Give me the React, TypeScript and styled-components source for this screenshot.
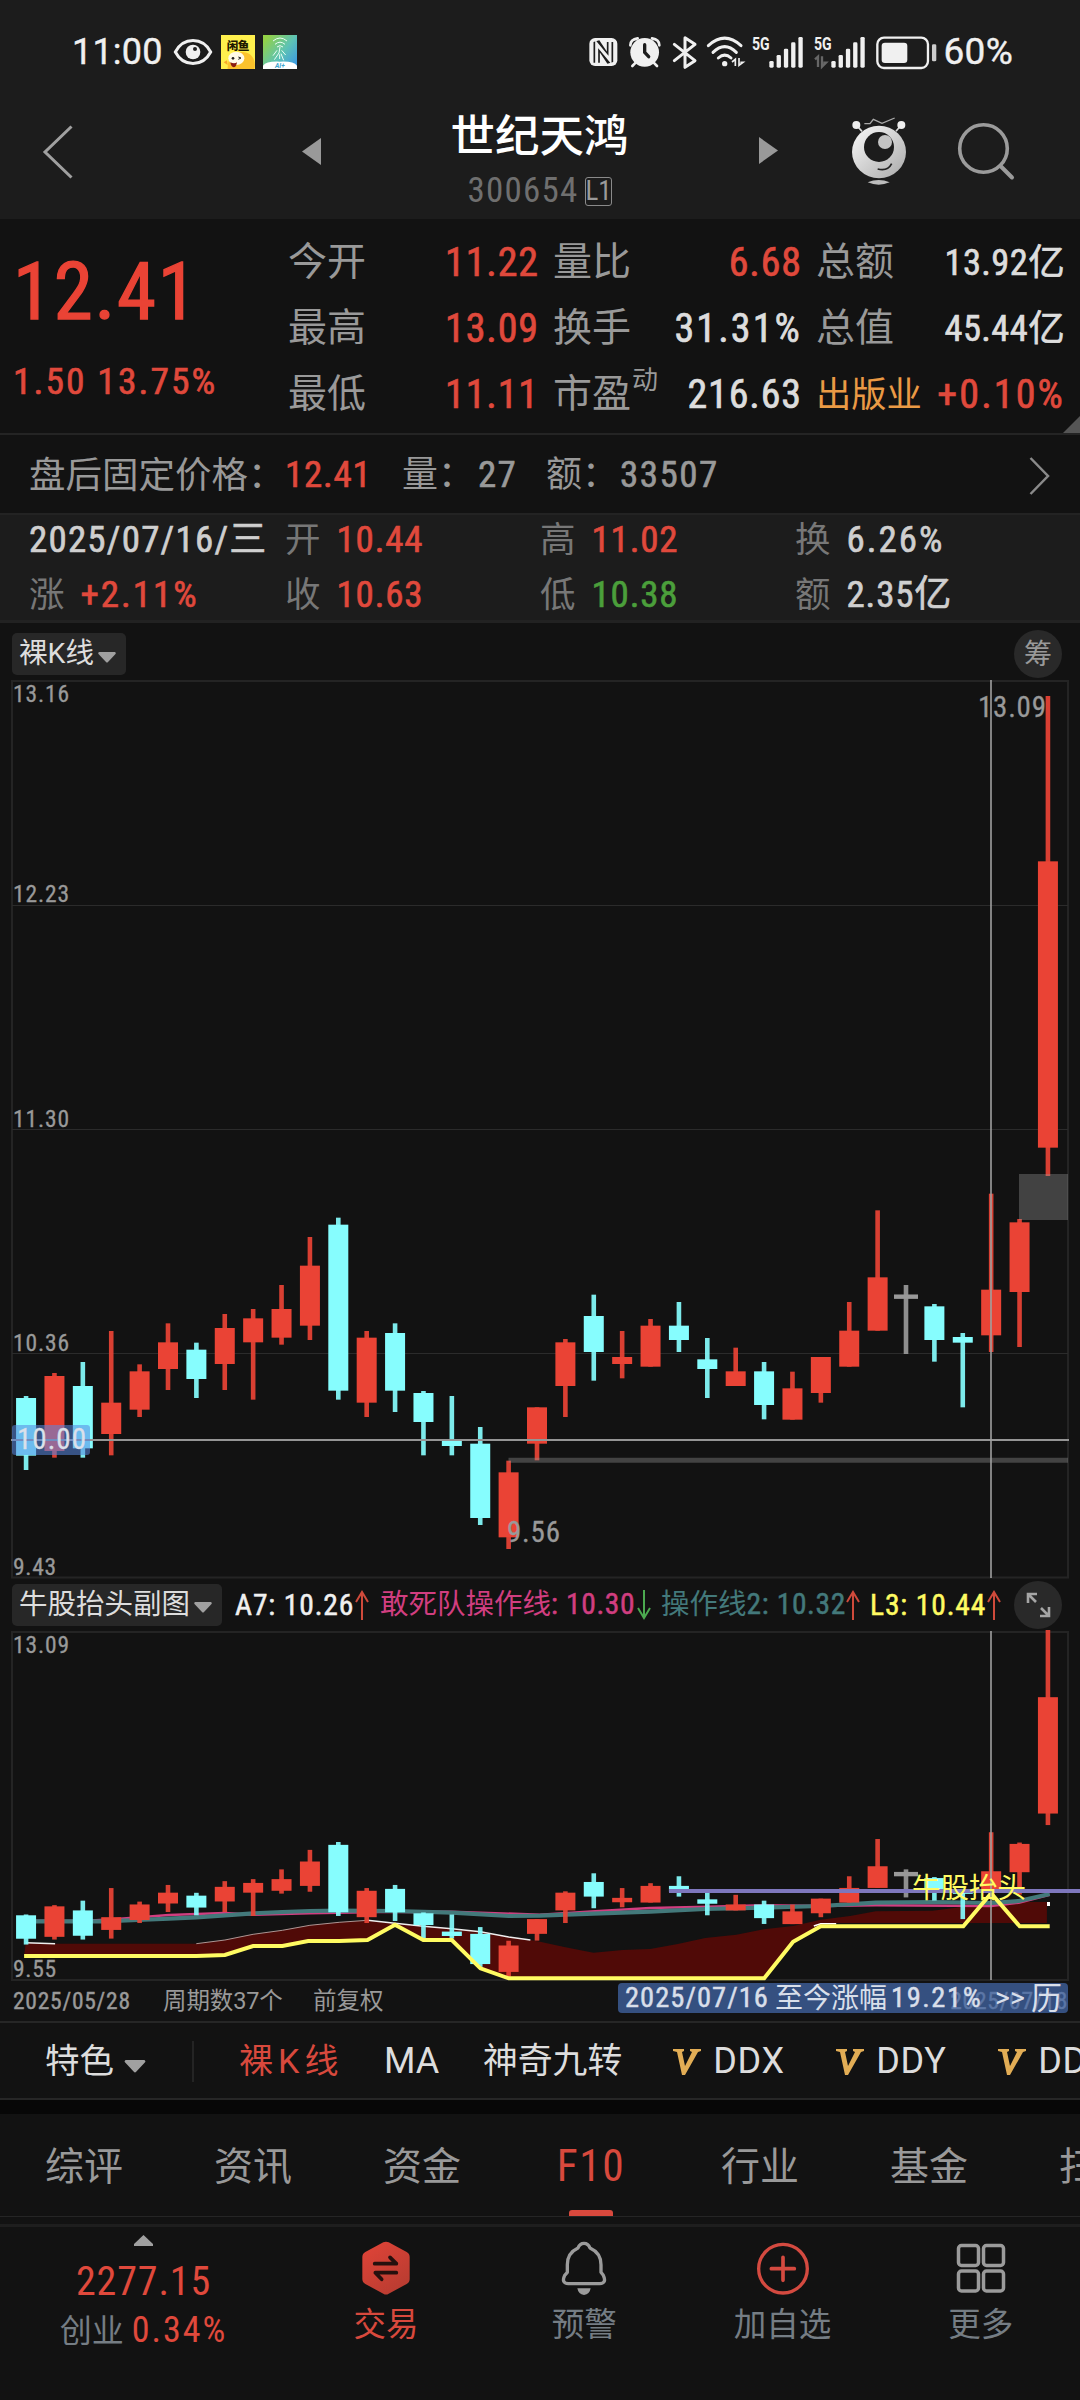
import React from "react";
import styled, { createGlobalStyle } from "styled-components";

const C = {
  bg: "#121212",
  panel: "#1c1c1c",
  line: "#242424",
  red: "#e0493c",
  bar: "#ea4335",
  cyan: "#86fdfe",
  grey: "#999999",
  dim: "#777777",
  light: "#dddddd",
  yellow: "#fffb62",
  teal: "#43797b",
  pink: "#d13e80",
  green: "#4b9f3b",
  orange: "#ea9a45",
  gold: "#e2ad55",
  slate: "#757d84",
};

const Global = createGlobalStyle`
  html, body { margin: 0; background: ${C.bg}; }
  body { width: 1080px; overflow-x: hidden; }
  * { box-sizing: border-box; }
`;

const Screen = styled.div`
  width: 1080px;
  height: 2400px;
  overflow: hidden;
  display: flex;
  flex-direction: column;
  background: ${C.bg};
  font-family: Roboto, "Noto Sans CJK SC", sans-serif;
  white-space: pre;
`;

const Txt = styled.span<{ $s: number; $c?: string; $w?: number; $ls?: number; $ml?: number; $width?: number }>`
  display: block;
  flex: none;
  font-size: ${(p) => p.$s}px;
  line-height: 1.2;
  color: ${(p) => p.$c ?? C.grey};
  font-weight: ${(p) => p.$w ?? 400};
  letter-spacing: ${(p) => p.$ls ?? 0}em;
  margin-left: ${(p) => p.$ml ?? 0}px;
  ${(p) => (p.$width ? `width: ${p.$width}px;` : "")}
`;

/* condensed figures for prices, dates and percentages */
const Fig = styled(Txt)<{ $thin?: boolean }>`
  font-stretch: 75%;
  -webkit-text-stroke: ${(p) => (p.$thin ? 0 : 0.017)}em currentColor;
`;

const Svg = styled.svg<{ $ml?: number }>`
  display: block;
  flex: none;
  margin-left: ${(p) => p.$ml ?? 0}px;
  overflow: visible;
`;

/* ---------- status bar ---------- */
const StatusBar = styled.div`
  height: 86px;
  padding: 19px 0 0 72px;
  display: flex;
  align-items: center;
  background: ${C.panel};
`;

const StatusRight = styled.div`
  display: flex;
  align-items: center;
  margin-left: auto;
  width: 491px;
`;

const Clock = styled(Txt)`
  -webkit-text-stroke: 0.4px currentColor;
`;

const W = "#f0f0f0";

const Signal = ({ x, second }: { x: number; second?: boolean }) => (
  <Svg $ml={second ? 10.7 : 8.3} width={51} height={35} viewBox={`${x} 45 153 105`}>
    <text x={x} y={91} fontSize={54} fontWeight={700} fill={W} textLength={53} lengthAdjust="spacingAndGlyphs" fontFamily="Roboto, sans-serif">
      5G
    </text>
    {second && <path d={`M${x + 3} 118l9-8v31M${x + 24} 109v31l12-12h-8`} stroke="#666" strokeWidth={7} fill="none" />}
    {[20, 38, 57, 76, 92].map((h, i) => (
      <rect key={i} x={x + 52 + i * 21.8} y={143 - h} width={13} height={h} rx={4} fill={W} />
    ))}
  </Svg>
);

const Status = () => (
  <StatusBar>
    <Clock $s={36} $c={W} $ls={0.005}>11:00</Clock>
    <Svg $ml={11} width={38} height={26} viewBox="0 0 114 78">
      <path d="M4 39C28-7 86-7 110 39C86 85 28 85 4 39Z" fill="none" stroke={W} strokeWidth={9} />
      <circle cx={57} cy={39} r={22} fill={W} />
      <circle cx={63} cy={30} r={6} fill="#222" />
    </Svg>
    <Svg $ml={9} width={34} height={34} viewBox="0 0 102 102">
      <rect width={102} height={102} fill="#fff04d" />
      <path d="M20 102C18 60 50 48 70 52C96 56 106 80 100 102Z" fill="#fbc22c" />
      <ellipse cx={46} cy={70} rx={24} ry={20} fill="#fffbe8" />
      <circle cx={36} cy={70} r={4} fill="#222" />
      <path d="M52 66l8 3-8 4" stroke="#222" strokeWidth={3} fill="none" />
      <path d="M28 82q12 6 20 0q-2 15-10 15q-8-2-10-15Z" fill="#8b1d10" />
      <path d="M8 82l10-6 2 14" fill="#f8a72a" />
      <text x={17} y={44} fontSize={35} fontWeight={900} fill="#1f1a00" textLength={68} fontFamily="'Noto Sans CJK SC', sans-serif">闲鱼</text>
    </Svg>
    <Svg $ml={8} width={34} height={34} viewBox="0 0 102 102">
      <defs>
        <linearGradient id="app" x1="0" y1="0" x2="1" y2="0.8">
          <stop offset="0.1" stopColor="#93d146" />
          <stop offset="0.6" stopColor="#5ec3b4" />
          <stop offset="1" stopColor="#3d9be0" />
        </linearGradient>
      </defs>
      <rect width={102} height={102} fill="url(#app)" />
      <path d="M0 92Q10 78 51 80Q92 78 102 92V102H0Z" fill="#fff" />
      <g fill="none" stroke="#eafff5" strokeWidth={3}>
        <path d="M30 18Q51 0 72 18M36 28Q51 15 66 28M42 36Q51 28 60 36M51 36L48 54L34 74M42 46L30 62M56 46L68 60M54 56L62 76M50 58V72" />
      </g>
      <text x={36} y={100} fontSize={20} fontStyle="italic" fontWeight={700} fill="#3fa5cf" fontFamily="Roboto, sans-serif">AI+</text>
    </Svg>
    <StatusRight>
      <Svg width={28.7} height={35} viewBox="27 45 86 105">
        <rect x={28} y={54} width={84} height={84} rx={17} fill={W} />
        <path d="M50 128V66L90 126V66" fill="none" stroke="#1c1c1c" strokeWidth={19} strokeLinejoin="bevel" />
        <path d="M50 138V72L90 120V54" fill="none" stroke={W} strokeWidth={9} />
      </Svg>
      <Svg $ml={11.7} width={31.7} height={35} viewBox="148 45 95 105">
        <circle cx={195} cy={97} r={43} fill={W} />
        <path d="M152 76Q152 58 174 55M239 76Q239 58 217 55M168 128l-10 10M222 128l10 10" stroke={W} strokeWidth={8} strokeLinecap="round" fill="none" />
        <path d="M195 74V97L207 110" stroke="#1c1c1c" strokeWidth={10} fill="none" strokeLinecap="round" />
      </Svg>
      <Svg $ml={12} width={23.7} height={35} viewBox="279 45 71 105">
        <path d="M283 73L345 122L315 142V53L345 73L283 122" stroke={W} strokeWidth={9} fill="none" strokeLinejoin="round" strokeLinecap="round" />
      </Svg>
      <Svg $ml={10.7} width={36.7} height={35} viewBox="382 45 110 105">
        <path d="M386 77Q435 32 484 77M400 97Q435 63 470 97M416 114Q435 97 454 114" stroke={W} strokeWidth={9} fill="none" strokeLinecap="round" />
        <circle cx={435} cy={131} r={8} fill={W} />
        <path d="M457 126l10-8v20M478 114v22l12-9h-8" stroke={W} strokeWidth={5} fill="none" />
      </Svg>
      <Signal x={517} />
      <Signal x={700} second />
      <Svg $ml={11} width={60.3} height={35} viewBox="887 45 181 105">
        <rect x={891} y={53} width={152} height={91} rx={20} fill="none" stroke={W} strokeWidth={7} />
        <rect x={904} y={68} width={77} height={61} rx={10} fill={W} />
        <rect x={1055} y={73} width={13} height={51} rx={4} fill="#ccc" />
      </Svg>
      <Clock $s={37} $c={W} $ml={7} $ls={0.01}>60%</Clock>
    </StatusRight>
  </StatusBar>
);

/* ---------- title bar ---------- */
const TitleBar = styled.header`
  height: 133px;
  padding: 21px 63px 0 43px;
  display: flex;
  align-items: flex-start;
  background: ${C.panel};
`;

const TitleText = styled.div`
  width: 438px;
  padding: 4px 1px 0 0;
  display: flex;
  flex-direction: column;
  align-items: center;
`;

const CodeRow = styled.div`
  display: flex;
  align-items: center;
  gap: 6px;
  margin-top: 6px;
`;

const LevelBadge = styled.span`
  width: 27px;
  height: 29px;
  border: 1.5px solid #8a8a8a;
  border-radius: 3px;
  color: #9a9a9a;
  font-size: 27px;
  font-stretch: 75%;
  line-height: 27px;
  text-align: center;
`;

const Title = () => (
  <TitleBar>
    <Svg width={30} height={54} viewBox="0 0 30 54" style={{ marginTop: 18 }}>
      <path d="M28.500 1.500L2 27L28.500 52.500" fill="none" stroke="#a0a0a0" strokeWidth={3} />
    </Svg>
    <Svg $ml={229} width={19} height={27} viewBox="0 0 19 27" style={{ marginTop: 31 }}>
      <path d="M19 0V27L0 13.500Z" fill={C.grey} />
    </Svg>
    <TitleText>
      <Txt $s={44.5} $c="#ffffff" $w={500}>世纪天鸿</Txt>
      <CodeRow>
        <Fig $thin $s={35} $c="#6f6f6f" $ls={0.035}>300654</Fig>
        <LevelBadge>L1</LevelBadge>
      </CodeRow>
    </TitleText>
    <Svg width={19} height={27} viewBox="0 0 19 27" style={{ marginTop: 30 }}>
      <path d="M0 0V27L19 13.500Z" fill={C.grey} />
    </Svg>
    <Svg $ml={73} width={56} height={68} viewBox="815 292 168 204" style={{ marginTop: 10 }}>
      <defs>
        <linearGradient id="bot" x1="0" y1="0" x2="1" y2="1">
          <stop offset="0" stopColor="#fafafa" />
          <stop offset="1" stopColor="#a9a9a9" />
        </linearGradient>
      </defs>
      <path d="M831 316L848 335M966 316L950 335" stroke="#ddd" strokeWidth={5} />
      <circle cx={831} cy={316} r={12} fill="#eee" />
      <circle cx={966} cy={316} r={12} fill="#eee" />
      <path d="M855 312H872L882 299L908 311L946 295" stroke="#aaa" strokeWidth={4} fill="none" />
      <ellipse cx={899} cy={397} rx={81} ry={79} fill="url(#bot)" />
      <ellipse cx={899} cy={382} rx={45} ry={45} fill="#1c1c1c" />
      <circle cx={917} cy={367} r={21} fill="#c4c4c4" />
      <path d="M895 448Q925 456 937 432" stroke="#222" strokeWidth={5} fill="none" />
      <path d="M865 488Q898 474 931 488Q898 502 865 488Z" fill="#bdbdbd" />
    </Svg>
    <Svg $ml={51} width={57} height={58} viewBox="0 0 57 58" style={{ marginTop: 16 }}>
      <circle cx={25.500} cy={25.500} r={23.800} fill="none" stroke="#9b9b9b" strokeWidth={3.600} />
      <path d="M42.500 43L54 54.500" stroke="#9b9b9b" strokeWidth={4} strokeLinecap="round" />
    </Svg>
  </TitleBar>
);

/* ---------- quote ---------- */
const Quote = styled.section`
  position: relative;
  height: 216px;
  display: flex;
  border-bottom: 2px solid ${C.line};
`;

const PriceCol = styled.div`
  width: 288px;
  padding: 26px 0 0 13px;
  display: flex;
  flex-direction: column;
`;

const StatGrid = styled.div`
  width: 777px;
  padding-top: 11px;
  display: grid;
  grid-template-columns: 251px 249px 249px;
  grid-auto-rows: 66px;
  column-gap: 14px;
`;

const Stat = styled.div`
  display: flex;
  align-items: center;
  justify-content: space-between;
`;

const Sup = styled.sup`
  position: relative;
  top: -18px;
  font-size: 26px;
  line-height: 0;
  margin-left: 1px;
  vertical-align: baseline;
`;

const Corner = styled.i`
  position: absolute;
  right: 0;
  bottom: 0;
  border-right: 17px solid #555;
  border-top: 17px solid transparent;
`;

type StatItem = [label: string, value: string, color: string, unit?: string];
const stats: StatItem[] = [
  ["今开", "11.22", C.red], ["量比", "6.68", C.red], ["总额", "13.92", C.light, "亿"],
  ["最高", "13.09", C.red], ["换手", "31.31%", C.light], ["总值", "45.44", C.light, "亿"],
  ["最低", "11.11", C.red], ["市盈", "216.63", C.light], ["出版业", "+0.10%", C.red],
];

const spacing = (v: string) => (v.includes("%") ? 0.053 : 0.022);

const QuoteBlock = () => (
  <Quote>
    <PriceCol>
      <Fig $s={79} $c={C.bar} $ls={0.022}>12.41</Fig>
      <Fig $s={37.500} $c={C.red} $ls={0.055} style={{ marginTop: 19 }}>1.50 13.75%</Fig>
    </PriceCol>
    <StatGrid>
      {stats.map(([label, value, color, unit]) => (
        <Stat key={label}>
          <Txt $s={label.length > 2 ? 35.300 : 39} $c={label.length > 2 ? C.orange : C.grey}>
            {label}
            {label === "市盈" && <Sup>动</Sup>}
          </Txt>
          <Fig $s={unit ? 36.500 : 40} $c={color} $ls={unit ? 0.01 : spacing(value)}>
            {value}
            {unit}
          </Fig>
        </Stat>
      ))}
    </StatGrid>
    <Corner />
  </Quote>
);

/* ---------- after-hours row ---------- */
const AfterRow = styled.section`
  height: 79px;
  padding: 3px 30px 0 29px;
  display: flex;
  align-items: center;
`;

const After = () => (
  <AfterRow>
    <Txt $s={36.5} $width={256}>盘后固定价格：</Txt>
    <Fig $s={37} $c={C.red} $ls={0.02} $width={117}>12.41</Fig>
    <Txt $s={36} $width={76}>量：</Txt>
    <Fig $s={37} $ls={0.035} $width={68}>27</Fig>
    <Txt $s={36} $width={74}>额：</Txt>
    <Fig $s={37} $ls={0.04}>33507</Fig>
    <Svg width={21} height={38} viewBox="0 0 21 38" style={{ marginLeft: "auto" }}>
      <path d="M1.500 1L19 19L1.500 37" fill="none" stroke="#8a8a8a" strokeWidth={2.500} />
    </Svg>
  </AfterRow>
);

/* ---------- selected day panel ---------- */
const DayPanel = styled.section`
  height: 110px;
  padding: 0 0 2px 29px;
  display: grid;
  grid-template-columns: 256px 255px 255px 1fr;
  grid-template-rows: 49px 61px;
  background: ${C.panel};
  border-top: 2px solid #232323;
  border-bottom: 3px solid #222;
`;

const DayCell = styled.div`
  display: flex;
  align-items: center;
  gap: 16px;
`;

const day: [string, string, string][] = [
  ["", "2025/07/16/三", "#cfcfcf"], ["开", "10.44", C.red], ["高", "11.02", C.red], ["换", "6.26%", "#cfcfcf"],
  ["涨", "+2.11%", C.red], ["收", "10.63", C.red], ["低", "10.38", C.green], ["额", "2.35亿", "#cfcfcf"],
];

/* ---------- charts ---------- */
const Bar = styled.div<{ $h: number; $top?: number }>`
  height: ${(p) => p.$h}px;
  padding: ${(p) => p.$top ?? 0}px 18px 0 12px;
  display: flex;
  align-items: center;
`;

const Chip = styled.div<{ $w: number }>`
  width: ${(p) => p.$w}px;
  height: 42px;
  padding: 0 10px 0 7px;
  display: flex;
  align-items: center;
  justify-content: space-between;
  flex: none;
  border-radius: 5px;
  background: #272727;
`;

const Round = styled.div`
  width: 48px;
  height: 48px;
  margin-left: auto;
  flex: none;
  display: flex;
  align-items: center;
  justify-content: center;
  border-radius: 50%;
  background: #292929;
`;

const Caret = ({ w = 18, h = 11 }: { w?: number; h?: number }) => (
  <Svg width={w} height={h} viewBox="0 0 18 11" preserveAspectRatio="none" style={{ marginTop: 6 }}>
    <path d="M1 0H17Q18.500 1 17.500 2L10 10Q9 11 8 10L0.500 2Q-0.500 1 1 0Z" fill="#a0a0a0" />
  </Svg>
);

// [high, body top, body bottom, low] in thirds of a pixel below y = 1150, then the colour key
type Candle = [number, number, number, number, "r" | "c" | "g"];
const candles: Candle[] = [
  [738, 744, 917, 960, "c"], [669, 678, 903, 923, "r"], [636, 708, 895, 923, "c"], [543, 758, 852, 916, "r"],
  [643, 664, 779, 801, "r"], [520, 577, 657, 720, "r"], [578, 599, 687, 744, "c"], [492, 534, 642, 720, "r"],
  [477, 505, 577, 749, "r"], [405, 477, 563, 584, "r"], [261, 347, 527, 570, "r"], [203, 224, 722, 749, "c"],
  [543, 563, 758, 801, "r"], [520, 549, 722, 786, "c"], [723, 729, 816, 916, "c"], [738, 873, 888, 916, "c"],
  [831, 881, 1104, 1125, "c"], [932, 967, 1162, 1197, "r"], [772, 772, 881, 931, "r"], [567, 577, 708, 801, "r"],
  [434, 498, 606, 692, "c"], [543, 621, 642, 685, "r"], [507, 527, 650, 650, "r"], [456, 527, 570, 606, "c"],
  [564, 628, 657, 744, "c"], [593, 664, 708, 708, "r"], [636, 664, 765, 808, "c"], [665, 715, 809, 809, "r"],
  [621, 621, 729, 758, "r"], [456, 542, 650, 650, "r"], [181, 382, 542, 542, "r"], [405, 440, 440, 612, "g"],
  [462, 469, 570, 635, "c"], [549, 561, 578, 772, "c"], [131, 419, 556, 606, "r"], [207, 217, 426, 591, "r"],
  [-1362, -866, -7, 78, "r"],
];
const fills = { r: C.bar, c: C.cyan, g: C.grey };

const Candles = ({ map }: { map: (y: number) => number }) => (
  <g>
    {candles.map(([h, t, b, l, k], i) => {
      const x = 26.07 + i * 28.385;
      const y = (v: number) => map(1150 + v / 3);
      const bh = Math.max(y(b) - y(t), 4.4);
      const bw = k === "g" ? 24 : 20;
      const mid = (y(b) + y(t)) / 2;
      return (
        <g key={i} fill={fills[k]}>
          <rect x={x - 2.300} y={y(h)} width={4.600} height={y(l) - y(h)} opacity={0.92} />
          <rect x={x - bw / 2} y={mid - bh / 2} width={bw} height={bh} />
        </g>
      );
    })}
  </g>
);

const Figure = styled.text`
  font-family: Roboto, sans-serif;
  font-stretch: 75%;
  stroke-width: 0.3px;
`;

const Num = ({ x, y, s = 23.5, w, children, fill = C.grey }: { x: number; y: number; s?: number; w: number; children: string; fill?: string }) => (
  <Figure x={x} y={y} fontSize={s} textLength={w} fill={fill} stroke={fill}>
    {children}
  </Figure>
);

const MainChart = () => (
  <Svg width={1080} height={898} viewBox="0 680 1080 898">
    <rect x={12} y={681} width={1056} height={896.500} fill="none" stroke="#242424" strokeWidth={2} />
    {[905.500, 1129.500, 1353.500].map((y) => (
      <path key={y} d={`M12 ${y}H1068`} stroke="#2b2b2b" strokeWidth={1.200} />
    ))}
    <Num x={13} y={702} w={56}>13.16</Num>
    <Num x={13} y={902} w={56}>12.23</Num>
    <Num x={13} y={1127} w={56}>11.30</Num>
    <Num x={13} y={1351} w={56}>10.36</Num>
    <Num x={13} y={1575} w={43}>9.43</Num>
    <Candles map={(y) => y} />
    <rect x={1019} y={1174} width={49} height={46} fill="#999" opacity={0.36} />
    <path d="M508.500 1460.300H1068" stroke="#999" opacity={0.36} strokeWidth={5} />
    <Num x={978} y={717} s={29} w={68}>13.09</Num>
    <Num x={507} y={1542} s={29} w={53}>9.56</Num>
    <path d="M11 1440H1069" stroke="#959595" strokeWidth={2} />
    <path d="M991 680V1578" stroke="#a0a0a0" strokeWidth={1.600} />
    <rect x={12} y={1425} width={78} height={30} rx={3} fill="rgb(88,136,225)" opacity={0.56} />
    <Num x={17} y={1449} s={29} w={69} fill="#dbe0ea">10.00</Num>
  </Svg>
);

// points on a grid 2.9037 units per pixel across and 3 down; the right half starts at R
const P = (pts: number[][]) =>
  pts.map(([x, y]) => `${(x / 2.9037).toFixed(1)},${(1570 + y / 3).toFixed(1)}`).join(" ");
const R = 1568;

const yellow = [
  [70, 1158], [570, 1158], [653, 1155], [735, 1128], [820, 1128], [895, 1113], [985, 1113], [1067, 1110],
  [1147, 1064], [1229, 1110], [1312, 1110], [1395, 1195], [1477, 1225], [R + 651, 1225], [R + 735, 1115],
  [R + 815, 1069], [R + 1229, 1069], [R + 1310, 970], [R + 1393, 1069], [R + 1480, 1069],
];
const average = [
  [75, 1118], [160, 1121], [570, 1121], [653, 1110], [735, 1093], [820, 1081], [900, 1066], [985, 1057],
  [1067, 1051], [1147, 1060], [1229, 1069], [1312, 1076], [1395, 1085], [1477, 1101], [R - 28, 1110], [R, 1115],
  [R + 74, 1132], [R + 155, 1148], [R + 240, 1140], [R + 320, 1137], [R + 400, 1122], [R + 480, 1104],
  [R + 570, 1094], [R + 650, 1078], [R + 735, 1068], [R + 815, 1049], [R + 900, 1038], [R + 975, 1024],
  [R + 1140, 1022], [R + 1229, 1010], [R + 1310, 1000], [R + 1400, 996], [R + 1472, 996],
];
const tealLine = [
  [75, 1054], [300, 1054], [400, 1050], [490, 1046], [570, 1042], [653, 1036], [735, 1030], [820, 1026],
  [900, 1023], [985, 1022], [1147, 1023], [1312, 1028], [1477, 1038], [R, 1037], [R + 155, 1031], [R + 320, 1025],
  [R + 480, 1017], [R + 650, 1013], [R + 815, 1008], [R + 975, 998], [R + 1140, 996], [R + 1310, 999],
  [R + 1390, 993], [R + 1480, 972],
];
const pinkLine = [
  [75, 1052], [240, 1053], [330, 1048], [490, 1035], [653, 1029], [735, 1034], [900, 1030], [1100, 1026],
  [1312, 1025], [R, 1034], [R + 160, 1024], [R + 320, 1014], [R + 490, 1010], [R + 650, 1006], [R + 815, 1008],
  [R + 975, 1006], [R + 1310, 1008], [R + 1390, 998], [R + 1480, 974],
];

const SubChart = () => (
  <Svg width={1080} height={350} viewBox="0 1631 1080 350">
    <rect x={12} y={1632} width={1056} height={348} fill="none" stroke="#242424" strokeWidth={2} />
    <Num x={13} y={1653} w={56}>13.09</Num>
    <Num x={13} y={1977} w={43}>9.55</Num>
    <polygon
      points={P([...average, [R + 1472, 1059], [R + 830, 1059], ...yellow.slice(0, 16).reverse()])}
      fill="#500a07"
    />
    <polyline points={P(average.slice(0, 2))} fill="none" stroke="#eee" strokeWidth={1.500} />
    <polyline points={P(average.slice(2, 9))} fill="none" stroke="#bba6a4" strokeWidth={0.900} />
    <polyline points={P(average.slice(8, 15))} fill="none" stroke="#eee" strokeWidth={1.500} />
    <polyline points={P(pinkLine)} fill="none" stroke={C.pink} strokeWidth={2.600} />
    <polyline points={P(tealLine)} fill="none" stroke={C.teal} strokeWidth={4.200} />
    <Candles map={(y) => 1630 + (y - 696) * 0.4064} />
    <polyline points={P([[R + 795, 1068], [R + 815, 1061], [R + 860, 1061]])} fill="none" stroke="#fff" strokeWidth={1.500} />
    <polyline points={P(yellow)} fill="none" stroke={C.yellow} strokeWidth={4} />
    <rect x={1047} y={1902} width={3} height={4} fill="#fff" />
    <path d="M669 1891H1080" stroke="#7e77bd" strokeWidth={4.200} />
    <path d="M991 1631V1980" stroke="#a0a0a0" strokeWidth={1.600} />
    <text x={912} y={1898} fontSize={28.500} fill={C.yellow} fontFamily="'Noto Sans CJK SC', sans-serif">牛股抬头</text>
  </Svg>
);

const Arrow = ({ up }: { up?: boolean }) => (
  <Svg width={14} height={30} viewBox="0 0 14 30">
    <path
      d={up ? "M7 30V2M1 12L7 2L13 12" : "M7 0V28M1 18L7 28L13 18"}
      fill="none"
      stroke={up ? "#cf4a3b" : "#4caa50"}
      strokeWidth={2}
    />
  </Svg>
);

const Indicator = styled.div<{ $w: number; $c: string; $ls?: number }>`
  width: ${(p) => p.$w}px;
  flex: none;
  display: flex;
  align-items: center;
  justify-content: space-between;
  color: ${(p) => p.$c};
  font-size: 29.500px;
  font-stretch: 75%;
  line-height: 40px;
  -webkit-text-stroke: 0.5px currentColor;
  letter-spacing: ${(p) => p.$ls ?? 0.022}em;
  margin-left: 11px;
`;

const Cjk = styled.span<{ $s: number }>`
  font-size: ${(p) => p.$s}px;
  -webkit-text-stroke: 0;
  letter-spacing: 0;
`;

const DateRow = styled.div`
  position: relative;
  height: 40px;
  padding: 0 12px 0 13px;
  display: flex;
  align-items: center;
`;

const SpanTag = styled.div`
  position: absolute;
  left: 618px;
  top: 2px;
  width: 450px;
  height: 30px;
  padding: 0 0 0 7px;
  display: flex;
  align-items: center;
  border-radius: 4px;
  background: rgba(66, 104, 170, 0.72);
`;

/* ---------- indicator tabs ---------- */
const ChipRow = styled.nav`
  height: 79px;
  display: flex;
  align-items: center;
  padding: 2px 0 0 45px;
  border-top: 2px solid #262626;
  border-bottom: 2px solid #262626;
  overflow: hidden;
`;

const Divider = styled.i`
  width: 2px;
  height: 41px;
  margin-left: 46px;
  background: #242424;
  flex: none;
`;

const Vip = ({ ml }: { ml: number }) => (
  <Svg $ml={ml} width={28} height={26} viewBox="0 0 28 26">
    <path d="M0 0H11V2L9 3L12 17L19 3L17 2V0H28V2L25 3L12 26H9L4 3L0 2Z" fill={C.gold} />
  </Svg>
);

const Strip = styled.div`
  height: 14px;
  background: #070707;
`;

/* ---------- section tabs ---------- */
const Tabs = styled.nav`
  height: 103px;
  display: flex;
  flex: none;
  overflow: hidden;
  border-bottom: 1px solid #252525;
`;

const Tab = styled.div<{ $on?: boolean }>`
  width: 169px;
  flex: none;
  display: flex;
  flex-direction: column;
  align-items: center;
  justify-content: space-between;
  padding: 30px 1px 0 0;
  font-size: ${(p) => (p.$on ? 43.5 : 39)}px;
  font-stretch: 75%;
  line-height: 46px;
  letter-spacing: ${(p) => (p.$on ? "0.035em" : 0)};
  color: ${(p) => (p.$on ? "#d8493d" : C.grey)};
  &::after {
    content: "";
    width: 44px;
    height: 6px;
    border-radius: 3px 3px 0 0;
    background: ${(p) => (p.$on ? "#d8493d" : "transparent")};
  }
`;

/* ---------- bottom bar ---------- */
const Bottom = styled.footer`
  height: 176px;
  margin-top: 7px;
  display: grid;
  grid-template-columns: 287px repeat(4, 198.25px);
  border-top: 3px solid #1e1e1e;
`;

const IndexCell = styled.div`
  display: flex;
  flex-direction: column;
  align-items: center;
  padding-top: 8px;
`;

const Row = styled.div`
  display: flex;
  align-items: center;
  margin-top: 3px;
`;

const Action = styled.div<{ $c: string }>`
  display: flex;
  flex-direction: column;
  align-items: center;
  padding-top: 14px;
  font-size: 32.500px;
  line-height: 40px;
  color: ${(p) => p.$c};
  gap: 10px;
`;

const App = () => (
  <Screen>
    <Global />
    <Status />
    <Title />
    <QuoteBlock />
    <After />
    <DayPanel>
      {day.map(([label, value, color]) => (
        <DayCell key={value}>
          {label && <Txt $s={35.500} $c={C.dim}>{label}</Txt>}
          <Fig $s={37} $c={color} $ls={label ? spacing(value) : 0.032}>{value}</Fig>
        </DayCell>
      ))}
    </DayPanel>

    <Bar $h={57} $top={5}>
      <Chip $w={114}>
        <Txt $s={28.500} $c={C.light}>裸K线</Txt>
        <Caret />
      </Chip>
      <Round>
        <Txt $s={28}>筹</Txt>
      </Round>
    </Bar>
    <MainChart />
    <Bar $h={53}>
      <Chip $w={210}>
        <Txt $s={28.500} $c={C.light}>牛股抬头副图</Txt>
        <Caret />
      </Chip>
      <Indicator $w={134} $c="#f0f0f0" $ls={0.03} style={{ marginLeft: 13 }}><span>A7: 10.26</span><Arrow up /></Indicator>
      <Indicator $w={271} $c={C.pink}><span><Cjk $s={28.500}>敢死队操作线</Cjk>: 10.30</span><Arrow /></Indicator>
      <Indicator $w={198} $c={C.teal} style={{ marginLeft: 10 }}><span><Cjk $s={28.500}>操作线</Cjk>2: 10.32</span><Arrow up /></Indicator>
      <Indicator $w={131} $c={C.yellow} $ls={0.03}><span>L3: 10.44</span><Arrow up /></Indicator>
      <Round>
        <Svg width={25} height={26} viewBox="0 0 25 26">
          <path d="M2 11V2H11M2 2L10 10M23 15V24H14M23 24L15 16" fill="none" stroke="#a5a5a5" strokeWidth={2.600} />
        </Svg>
      </Round>
    </Bar>
    <SubChart />
    <DateRow>
      <Fig $s={23.500} $ls={0.032} $width={150}>2025/05/28</Fig>
      <Txt $s={23.500} $ls={-0.005} $width={150}>周期数37个</Txt>
      <Txt $s={23.500}>前复权</Txt>
      <Fig $s={23.500} $ls={0.032} style={{ marginLeft: "auto" }}>2025/07/18</Fig>
      <SpanTag>
        <Fig $s={28.500} $c="#d9dfea" $ls={0.036} $width={150}>2025/07/16</Fig>
        <Txt $s={28} $c="#d9dfea" $width={116}>至今涨幅</Txt>
        <Fig $s={28.500} $c="#d9dfea" $ls={0.055} $width={104}>19.21%</Fig>
        <Txt $s={28.500} $c="#d9dfea" $width={36}>&gt;&gt;</Txt>
        <Txt $s={31} $c="#d9dfea">历</Txt>
      </SpanTag>
    </DateRow>

    <ChipRow>
      <Txt $s={34.500} $c={C.light}>特色</Txt>
      <Svg $ml={10} width={22} height={13} viewBox="0 0 18 11" style={{ marginTop: 10 }}>
        <path d="M1 0H17Q18.500 1 17.500 2L10 10Q9 11 8 10L0.500 2Q-0.500 1 1 0Z" fill="#a0a0a0" />
      </Svg>
      <Divider />
      <Txt $s={34} $c="#d8493d" $ml={45} $ls={0.15} $width={145}>裸K线</Txt>
      <Txt $s={36} $c={C.light} $width={99}>MA</Txt>
      <Txt $s={34.800} $c={C.light}>神奇九转</Txt>
      <Vip ml={51} />
      <Txt $s={36} $c={C.light} $ml={12} $ls={0.02} $width={74}>DDX</Txt>
      <Vip ml={49} />
      <Txt $s={36} $c={C.light} $ml={12} $ls={0.02} $width={74}>DDY</Txt>
      <Vip ml={48} />
      <Txt $s={36} $c={C.light} $ml={12} $ls={0.02}>DDZ</Txt>
    </ChipRow>
    <Strip />
    <Tabs>
      <Tab>综评</Tab>
      <Tab>资讯</Tab>
      <Tab>资金</Tab>
      <Tab $on>F10</Tab>
      <Tab>行业</Tab>
      <Tab>基金</Tab>
      <Tab>扫雷</Tab>
    </Tabs>
    <Bottom>
      <IndexCell>
        <Svg width={19} height={11} viewBox="0 0 19 11">
          <path d="M9.500 0L19 9V11H0V9Z" fill="#a0a0a0" />
        </Svg>
        <Fig $thin $s={40} $c={C.red} $ls={0.022} style={{ marginTop: 12 }}>2277.15</Fig>
        <Row>
          <Txt $s={32} $c={C.slate}>创业</Txt>
          <Fig $thin $s={36} $c={C.red} $ls={0.055} $ml={8}>0.34%</Fig>
        </Row>
      </IndexCell>
      <Action $c="#d8493d">
        <Svg width={54} height={54} viewBox="59 64 162 162">
          <defs>
            <linearGradient id="hex" x1="0" y1="0" x2="0.700" y2="1">
              <stop offset="0" stopColor="#e24438" />
              <stop offset="1" stopColor="#b93c31" />
            </linearGradient>
          </defs>
          <path d="M132 68Q140 64 148 68L202 97Q211 102 211 112V178Q211 188 202 193L148 222Q140 227 132 222L78 193Q69 188 69 178V112Q69 102 78 97Z" fill="url(#hex)" />
          <path d="M106 132H171L152 113M171 159H108L127 179" fill="none" stroke="#26100e" strokeWidth={11} strokeLinecap="round" strokeLinejoin="round" />
        </Svg>
        交易
      </Action>
      <Action $c={C.slate}>
        <Svg width={54} height={54} viewBox="652 64 162 162">
          <path d="M733 71Q746 71 751 85Q784 100 784 135V158L791 167Q802 191 780 192H686Q664 191 675 167L683 158V135Q683 100 715 85Q720 71 733 71Z" fill="none" stroke="#9b9b9b" strokeWidth={10} strokeLinejoin="round" />
          <path d="M713 206H753Q750 224 733 226Q716 224 713 206Z" fill="#9b9b9b" />
        </Svg>
        预警
      </Action>
      <Action $c={C.slate}>
        <Svg width={54} height={54} viewBox="1249 64 162 162">
          <circle cx={1330} cy={147} r={73} fill="none" stroke="#d44a40" strokeWidth={10} />
          <path d="M1330 113V182M1295 147H1364" stroke="#d44a40" strokeWidth={11} strokeLinecap="round" />
        </Svg>
        加自选
      </Action>
      <Action $c={C.slate}>
        <Svg width={54} height={54} viewBox="0 0 54 54">
          {[[4.5, 4.500], [29.500, 4.500], [4.500, 30], [29.500, 30]].map(([x, y]) => (
            <rect key={`${x}-${y}`} x={x} y={y} width={20} height={20} rx={3} fill="none" stroke="#9b9b9b" strokeWidth={3.500} />
          ))}
        </Svg>
        更多
      </Action>
    </Bottom>
  </Screen>
);

export default App;
